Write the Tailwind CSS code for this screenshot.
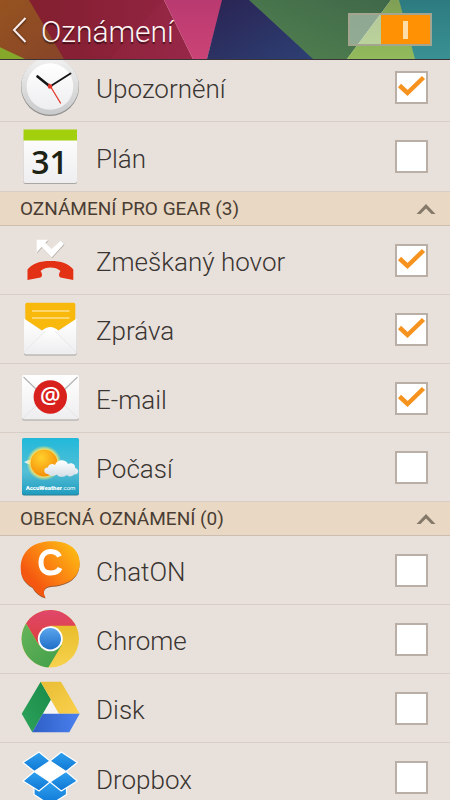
<!DOCTYPE html>
<html lang="cs">
<head>
    <meta charset="UTF-8">
    <meta name="viewport" content="width=device-width, initial-scale=1.0">
    <title>Oznámení</title>
    <script src="https://cdn.jsdelivr.net/npm/@tailwindcss/browser@4"></script>
</head>
<body class="bg-[#e8e1db] font-['Roboto',sans-serif] text-[#3a3532]">
<div class="h-screen flex flex-col overflow-hidden">
    <header class="relative z-10 h-15 shrink-0 flex items-center pl-2 pr-[18px] border-b border-[#3a3438]">
        <svg class="absolute inset-0 -z-10 w-full h-full" viewBox="0 0 450 60" preserveAspectRatio="none" aria-hidden="true">
            <defs>
                <linearGradient id="brown" x1="0" y1="0" x2="1" y2="1"><stop offset="0" stop-color="#96531f"/><stop offset="1" stop-color="#87442a"/></linearGradient>
                <linearGradient id="wine" x1="0" y1="0" x2="1" y2="0"><stop offset="0" stop-color="#85202f"/><stop offset="1" stop-color="#982748"/></linearGradient>
                <linearGradient id="pink" x1="0" y1="0" x2="0" y2="1"><stop offset="0" stop-color="#b93a70"/><stop offset="1" stop-color="#cb4376"/></linearGradient>
                <linearGradient id="navy" x1="0" y1="0" x2="1" y2="1"><stop offset="0" stop-color="#2a2352"/><stop offset="1" stop-color="#2d4074"/></linearGradient>
                <linearGradient id="green" x1="1" y1="0" x2="0" y2="1"><stop offset="0" stop-color="#3f6849"/><stop offset="1" stop-color="#52824f"/></linearGradient>
                <linearGradient id="lime" x1="0" y1="0" x2="0" y2="1"><stop offset="0" stop-color="#7f9f54"/><stop offset="1" stop-color="#92bb5c"/></linearGradient>
                <linearGradient id="teal" x1="0" y1="0" x2="0" y2="1"><stop offset="0" stop-color="#2d7b80"/><stop offset="1" stop-color="#399193"/></linearGradient>
            </defs>
            <path d="M0 0H40L70 60H0z" fill="url(#brown)"/>
            <path d="M0 48L25 60H0z" fill="#86a82a"/>
            <path d="M29 0H164L193 60H64z" fill="url(#wine)"/>
            <path d="M29 0L64 60H110L164 0z" fill="#7b1a2c" fill-opacity=".15"/>
            <path d="M164 0H223L207 60H193z" fill="url(#pink)"/>
            <path d="M222 0H250L314 60H207z" fill="url(#navy)"/>
            <path d="M249 0H391L347 60H313z" fill="url(#green)"/>
            <path d="M391 0H400L416 60H347z" fill="url(#lime)"/>
            <path d="M399 0H450V60H415z" fill="url(#teal)"/>
        </svg>
        <a href="#" aria-label="Zpět" class="w-[33px] shrink-0 pl-1">
            <svg class="w-4 h-7 drop-shadow-[0_1px_1px_rgba(0,0,0,0.6)]" viewBox="0 0 16 28" fill="none" stroke="#fbeef0" stroke-width="2"><path d="M13.5 2L2 14L13.5 26"/></svg>
        </a>
        <h1 class="flex-1 pt-1 text-[30px] leading-9 font-light text-[#fff5f5] text-shadow-[0_2px_1px_rgba(0,0,0,0.5)]">Oznámení</h1>
        <button type="button" role="switch" aria-checked="true" aria-label="Oznámení" class="w-21 h-[33px] flex justify-end border-2 border-[#a3a58f] bg-white/40">
            <span class="w-[49px] h-full flex items-center justify-center bg-[#ff9204]">
                <span class="w-[5px] h-[18px] bg-[#ffdda6]"></span>
            </span>
        </button>
    </header>

    <main class="flex-1 overflow-hidden">
        <ul class="-mt-[7px]">
            <li>
                <label class="h-[69px] flex items-center pl-5 pr-[22px] border-b border-[#d8cec6]">
                    <svg class="size-15 shrink-0" viewBox="0 0 60 60" aria-hidden="true">
                        <defs>
                            <linearGradient id="rim" x1="0" y1="0" x2="0" y2="1"><stop offset="0" stop-color="#f1f1f1"/><stop offset="1" stop-color="#c9cacb"/></linearGradient>
                            <linearGradient id="paper" x1="0" y1="0" x2="0" y2="1"><stop offset="0" stop-color="#ffffff"/><stop offset="1" stop-color="#eeeef0"/></linearGradient>
                        </defs>
                        <circle cx="30" cy="30" r="29" fill="#8f8d8b"/>
                        <circle cx="30" cy="29" r="28.7" fill="url(#rim)"/>
                        <circle cx="30" cy="29.5" r="23.3" fill="url(#paper)"/>
                        <g stroke-linecap="round">
                            <path d="M30 29.5L17.5 19.5" stroke="#151515" stroke-width="2.6"/>
                            <path d="M30 29.5L50.5 16.5" stroke="#151515" stroke-width="1.9"/>
                            <path d="M29 27L40.5 46" stroke="#e2382a" stroke-width="1.3"/>
                        </g>
                        <circle cx="30" cy="29.5" r="2.3" fill="#e2382a"/>
                    </svg>
                    <span class="flex-1 pl-4 pt-1 text-[26px] leading-8 font-light">Upozornění</span>
                    <span class="grid">
                        <input type="checkbox" checked class="peer col-start-1 row-start-1 appearance-none size-[33px] bg-white border-2 border-[#b9afa7]">
                        <svg class="hidden peer-checked:block pointer-events-none col-start-1 row-start-1 size-[33px]" viewBox="0 0 33 33" fill="none" stroke="#f6921e" stroke-width="4.5"><path d="M4.5 14.5L12.5 22L28.5 6.5"/></svg>
                    </span>
                </label>
            </li>
            <li>
                <label class="h-[69px] flex items-center pl-5 pr-[22px]">
                    <svg class="size-15 shrink-0" viewBox="0 0 60 60" aria-hidden="true">
                        <rect x="3.5" y="4" width="53.5" height="53" rx="2" fill="#a9a5a1"/>
                        <rect x="3.5" y="3" width="53.5" height="53" rx="2" fill="url(#paper)"/>
                        <path d="M3.5 2.5H57V13.5H3.5z" fill="#a3d00c"/>
                        <text x="29.5" y="46.5" text-anchor="middle" font-family="Open Sans, sans-serif" font-weight="600" font-size="32" fill="#1d2314">31</text>
                    </svg>
                    <span class="flex-1 pl-4 pt-1 text-[26px] leading-8 font-light">Plán</span>
                    <span class="grid">
                        <input type="checkbox" class="peer col-start-1 row-start-1 appearance-none size-[33px] bg-white border-2 border-[#b9afa7]">
                        <svg class="hidden peer-checked:block pointer-events-none col-start-1 row-start-1 size-[33px]" viewBox="0 0 33 33" fill="none" stroke="#f6921e" stroke-width="4.5"><path d="M4.5 14.5L12.5 22L28.5 6.5"/></svg>
                    </span>
                </label>
            </li>
        </ul>

        <section>
            <h2>
                <button type="button" aria-expanded="true" class="w-full h-[35px] flex items-center justify-between pl-5 pr-[14px] bg-[#e9d8c3] border-y border-t-[#d8cec6] border-b-[#cdbfb0]">
                    <span class="text-[19px] leading-6 text-[#4a3d33]">OZNÁMENÍ PRO GEAR (3)</span>
                    <svg class="w-5 h-3" viewBox="0 0 20 12" fill="#85796a" aria-hidden="true"><path d="M10 1L19.500 11H15.500L10 5.500L4.500 11H.5z"/></svg>
                </button>
            </h2>
            <ul>
                <li>
                    <label class="h-[69px] flex items-center pl-5 pr-[22px] border-b border-[#d8cec6]">
                        <svg class="size-15 shrink-0" viewBox="0 0 60 60" aria-hidden="true">
                            <path d="M17.2 10.5H28.8L25.8 13.7L32.2 19.7L41.2 11.5L44.5 14.7L32.2 28.2L22.2 17.7L17.2 23.2z" fill="#b5afaa"/>
                            <path d="M16.7 9.8H28.3L25.3 13L31.7 19L40.7 10.8L44 14L31.7 27.5L21.7 17L16.7 22.5z" fill="#fff"/>
                            <path d="M7.5 50V39.5C12 33.5 20 31 30.5 31S49 33.5 53.3 39.5V50L40.5 47.5C38.5 46.5 38.5 43.5 40.5 41C38 38.5 34 37.5 30.5 37.5S23 38.5 20.5 41C22.5 43.5 22.5 46.5 20.5 47.5z" fill="#e33115"/>
                        </svg>
                        <span class="flex-1 pl-4 pt-1 text-[26px] leading-8 font-light">Zmeškaný hovor</span>
                        <span class="grid">
                            <input type="checkbox" checked class="peer col-start-1 row-start-1 appearance-none size-[33px] bg-white border-2 border-[#b9afa7]">
                            <svg class="hidden peer-checked:block pointer-events-none col-start-1 row-start-1 size-[33px]" viewBox="0 0 33 33" fill="none" stroke="#f6921e" stroke-width="4.5"><path d="M4.5 14.5L12.5 22L28.5 6.5"/></svg>
                        </span>
                    </label>
                </li>
                <li>
                    <label class="h-[69px] flex items-center pl-5 pr-[22px] border-b border-[#d8cec6]">
                        <svg class="size-15 shrink-0" viewBox="0 0 60 60" aria-hidden="true">
                            <path d="M5.3 5.3q0-1.5 1.5-1.5h47q1.5 0 1.5 1.5V40H5.3z" fill="#f9b80c"/>
                            <path d="M12 12H49.5M12 19H49.5" stroke="#fde08a" stroke-width="1.5"/>
                            <path d="M4 20.5L22 31.5Q30.3 26 38.5 31.5L56.7 20.5V54.5q0 2-2 2H6q-2 0-2-2z" fill="#a5a19e"/>
                            <path d="M4 19.5L22 31.5C26 28 35 28 38.5 31.5L56.7 19.5V53.5q0 2-2 2H6q-2 0-2-2z" fill="url(#paper)"/>
                            <path d="M4.500 53L25 32.5C27.500 29 33 29 35.5 32.5L56 53" fill="url(#paper)" stroke="#e4e4e4" stroke-width=".8"/>
                            <path d="M22 32C27 26.5 33.500 26.500 38.500 32z" fill="#fff"/>
                        </svg>
                        <span class="flex-1 pl-4 pt-1 text-[26px] leading-8 font-light">Zpráva</span>
                        <span class="grid">
                            <input type="checkbox" checked class="peer col-start-1 row-start-1 appearance-none size-[33px] bg-white border-2 border-[#b9afa7]">
                            <svg class="hidden peer-checked:block pointer-events-none col-start-1 row-start-1 size-[33px]" viewBox="0 0 33 33" fill="none" stroke="#f6921e" stroke-width="4.5"><path d="M4.5 14.5L12.5 22L28.5 6.5"/></svg>
                        </span>
                    </label>
                </li>
                <li>
                    <label class="h-[69px] flex items-center pl-5 pr-[22px] border-b border-[#d8cec6]">
                        <svg class="size-15 shrink-0" viewBox="0 0 60 60" aria-hidden="true">
                            <rect x="2" y="8" width="57" height="44.5" rx="2" fill="#a5a19e"/>
                            <rect x="2" y="7" width="57" height="44.5" rx="2" fill="url(#paper)"/>
                            <path d="M3 50L17 37M58 50L44 37" stroke="#e4e4e4"/>
                            <path d="M3.5 9L17 22M57.5 9L44 22" stroke="#b4b4b4" stroke-width="1.2"/>
                            <circle cx="30.3" cy="29" r="16.7" fill="#d8201c"/>
                            <text x="30.3" y="35.5" text-anchor="middle" font-family="Open Sans, sans-serif" font-weight="600" font-size="23" fill="#fff">@</text>
                        </svg>
                        <span class="flex-1 pl-4 pt-1 text-[26px] leading-8 font-light">E-mail</span>
                        <span class="grid">
                            <input type="checkbox" checked class="peer col-start-1 row-start-1 appearance-none size-[33px] bg-white border-2 border-[#b9afa7]">
                            <svg class="hidden peer-checked:block pointer-events-none col-start-1 row-start-1 size-[33px]" viewBox="0 0 33 33" fill="none" stroke="#f6921e" stroke-width="4.5"><path d="M4.5 14.5L12.5 22L28.5 6.5"/></svg>
                        </span>
                    </label>
                </li>
                <li>
                    <label class="h-[68px] flex items-center pl-5 pr-[22px]">
                        <svg class="size-15 shrink-0" viewBox="0 0 60 60" aria-hidden="true">
                            <defs>
                                <linearGradient id="sky" x1="0" y1="0" x2="0" y2="1"><stop offset="0" stop-color="#22b9da"/><stop offset=".6" stop-color="#55bfd6"/><stop offset="1" stop-color="#1f9cc0"/></linearGradient>
                                <radialGradient id="sun" cx=".4" cy=".3" r=".75"><stop offset="0" stop-color="#ffd02c"/><stop offset="1" stop-color="#f58a07"/></radialGradient>
                                <radialGradient id="glow"><stop offset=".75" stop-color="#ffe96a"/><stop offset="1" stop-color="#ffe96a" stop-opacity="0"/></radialGradient>
                                <linearGradient id="cloud" x1="0" y1="0" x2="0" y2="1"><stop offset="0" stop-color="#ffffff"/><stop offset="1" stop-color="#d5dee6"/></linearGradient>
                            </defs>
                            <rect x="2" y="1.5" width="57" height="57" rx="2" fill="#2a7f94"/>
                            <rect x="2" y="1" width="57" height="56.5" rx="2" fill="url(#sky)"/>
                            <path d="M4 25Q9 22 14 23L13 28Q8 28 4 25z" fill="#d8eef2"/>
                            <circle cx="24" cy="26" r="17.5" fill="url(#glow)"/>
                            <circle cx="24" cy="26" r="13.5" fill="url(#sun)"/>
                            <path d="M28 37C23 37 23 30 28 30.5C28 27 33 26 35 28C37 22 46 22 48 27C52 25 56 28 55 31C60 32 59 38 54 37.5C52 40 48 40 47 38C43 41 38 40 37 37.5C34 39.5 30 39.5 28 37z" fill="url(#cloud)"/>
                            <text x="30.5" y="52.5" text-anchor="middle" font-family="Roboto, sans-serif" font-size="6" fill="#fff"><tspan font-weight="900">AccuWeather</tspan>.com</text>
                        </svg>
                        <span class="flex-1 pl-4 pt-1 text-[26px] leading-8 font-light">Počasí</span>
                        <span class="grid">
                            <input type="checkbox" class="peer col-start-1 row-start-1 appearance-none size-[33px] bg-white border-2 border-[#b9afa7]">
                            <svg class="hidden peer-checked:block pointer-events-none col-start-1 row-start-1 size-[33px]" viewBox="0 0 33 33" fill="none" stroke="#f6921e" stroke-width="4.5"><path d="M4.5 14.5L12.5 22L28.5 6.5"/></svg>
                        </span>
                    </label>
                </li>
            </ul>
        </section>

        <section>
            <h2>
                <button type="button" aria-expanded="true" class="w-full h-[35px] flex items-center justify-between pl-5 pr-[14px] bg-[#e9d8c3] border-y border-t-[#d8cec6] border-b-[#cdbfb0]">
                    <span class="text-[19px] leading-6 text-[#4a3d33]">OBECNÁ OZNÁMENÍ (0)</span>
                    <svg class="w-5 h-3" viewBox="0 0 20 12" fill="#85796a" aria-hidden="true"><path d="M10 1L19.5 11H15.5L10 5.5L4.5 11H.5z"/></svg>
                </button>
            </h2>
            <ul>
                <li>
                    <label class="h-[69px] flex items-center pl-5 pr-[22px] border-b border-[#d8cec6]">
                        <svg class="size-15 shrink-0" viewBox="0 0 60 60" aria-hidden="true">
                            <defs>
                                <linearGradient id="chat" x1=".9" y1=".1" x2=".2" y2=".7"><stop offset="0" stop-color="#fdb813"/><stop offset=".6" stop-color="#fb8012"/><stop offset="1" stop-color="#f4570f"/></linearGradient>
                            </defs>
                            <path d="M30 2C48 1 59.5 10 59.5 24C59.5 40 46 46 31 47C24 48 22 52 25.5 58.5C20 57 15 53 12.5 48C5 44 1 38 1 29C1 13 12 3 30 2z" fill="#9b5a35"/>
                            <path d="M30 1.2C48 .5 59.7 9 59.7 23C59.7 39 46 45 31 46C24 47 22 51 25.500 57.500C20 56 15 52 12.500 47C5 43 .7 37 .7 28C.7 12 12 2 30 1.200z" fill="url(#chat)"/>
                            <path d="M39.500 16.500C37.500 12.500 34.500 11.500 30.800 11.500C24.500 11.500 21 16 21 22.500S24.500 33 30.800 33C35 33 38.500 31.500 40 28" fill="none" stroke="#fff" stroke-width="5"/>
                        </svg>
                        <span class="flex-1 pl-4 pt-1 text-[26px] leading-8 font-light">ChatON</span>
                        <span class="grid">
                            <input type="checkbox" class="peer col-start-1 row-start-1 appearance-none size-[33px] bg-white border-2 border-[#b9afa7]">
                            <svg class="hidden peer-checked:block pointer-events-none col-start-1 row-start-1 size-[33px]" viewBox="0 0 33 33" fill="none" stroke="#f6921e" stroke-width="4.5"><path d="M4.5 14.5L12.5 22L28.5 6.5"/></svg>
                        </span>
                    </label>
                </li>
                <li>
                    <label class="h-[69px] flex items-center pl-5 pr-[22px] border-b border-[#d8cec6]">
                        <svg class="size-15 shrink-0" viewBox="0 0 60 60" aria-hidden="true">
                            <defs>
                                <linearGradient id="cred" x1="0" y1="0" x2="0" y2="1"><stop offset="0" stop-color="#e0476b"/><stop offset="1" stop-color="#dc3f3c"/></linearGradient>
                                <linearGradient id="cyellow" x1="0" y1="0" x2="0" y2="1"><stop offset="0" stop-color="#e3b620"/><stop offset="1" stop-color="#f7d24d"/></linearGradient>
                                <linearGradient id="cgreen" x1="0" y1="0" x2="1" y2="1"><stop offset="0" stop-color="#68b45a"/><stop offset="1" stop-color="#3f9e49"/></linearGradient>
                                <linearGradient id="cblue" x1="0" y1="0" x2="0" y2="1"><stop offset="0" stop-color="#5ba5ec"/><stop offset="1" stop-color="#1f6fc9"/></linearGradient>
                            </defs>
                            <circle cx="30.3" cy="29.8" r="28.7" fill="url(#cyellow)"/>
                            <path d="M30.3 16.8H55.9A28.7 28.7 0 0 0 6 14.5L19 36.3z" fill="url(#cred)"/>
                            <path d="M6 14.5A28.7 28.7 0 0 0 28.3 58.4L41.6 36.3L30.3 30L19 36.3z" fill="url(#cgreen)"/>
                            <circle cx="30.3" cy="29.8" r="12.5" fill="#fff"/>
                            <circle cx="30.3" cy="29.8" r="10.7" fill="url(#cblue)"/>
                        </svg>
                        <span class="flex-1 pl-4 pt-1 text-[26px] leading-8 font-light">Chrome</span>
                        <span class="grid">
                            <input type="checkbox" class="peer col-start-1 row-start-1 appearance-none size-[33px] bg-white border-2 border-[#b9afa7]">
                            <svg class="hidden peer-checked:block pointer-events-none col-start-1 row-start-1 size-[33px]" viewBox="0 0 33 33" fill="none" stroke="#f6921e" stroke-width="4.5"><path d="M4.5 14.5L12.5 22L28.5 6.5"/></svg>
                        </span>
                    </label>
                </li>
                <li>
                    <label class="h-[69px] flex items-center pl-5 pr-[22px] border-b border-[#d8cec6]">
                        <svg class="size-15 shrink-0" viewBox="0 0 60 60" aria-hidden="true">
                            <defs>
                                <linearGradient id="dgreen" x1="0" y1="1" x2="1" y2="0"><stop offset="0" stop-color="#2fa45c"/><stop offset="1" stop-color="#178a48"/></linearGradient>
                                <linearGradient id="dyellow" x1="0" y1="0" x2="1" y2="1"><stop offset="0" stop-color="#e9bd34"/><stop offset="1" stop-color="#fad04d"/></linearGradient>
                                <linearGradient id="dblue" x1="0" y1="0" x2="1" y2="0"><stop offset="0" stop-color="#2f5fc6"/><stop offset="1" stop-color="#4a80ee"/></linearGradient>
                            </defs>
                            <path d="M30.3 21L39.5 36.5H22z" fill="#f7f5f3"/>
                            <path d="M20.7 3.8L1.7 35.8L12.3 54.2L31 21.5z" fill="url(#dgreen)"/>
                            <path d="M20.7 3.8H41L59.7 35.8H39z" fill="url(#dyellow)"/>
                            <path d="M12.3 54.2H49.3L59.7 35.8H22.8z" fill="url(#dblue)"/>
                        </svg>
                        <span class="flex-1 pl-4 pt-1 text-[26px] leading-8 font-light">Disk</span>
                        <span class="grid">
                            <input type="checkbox" class="peer col-start-1 row-start-1 appearance-none size-[33px] bg-white border-2 border-[#b9afa7]">
                            <svg class="hidden peer-checked:block pointer-events-none col-start-1 row-start-1 size-[33px]" viewBox="0 0 33 33" fill="none" stroke="#f6921e" stroke-width="4.5"><path d="M4.5 14.5L12.5 22L28.5 6.5"/></svg>
                        </span>
                    </label>
                </li>
                <li>
                    <label class="h-[69px] flex items-center pl-5 pr-[22px]">
                        <svg class="size-15 shrink-0" viewBox="0 0 60 60" aria-hidden="true">
                            <defs>
                                <linearGradient id="box" x1="0" y1="0" x2="0" y2="1"><stop offset="0" stop-color="#2ea0ee"/><stop offset="1" stop-color="#0f76d4"/></linearGradient>
                            </defs>
                            <path d="M14.3 23.5L30 13L46 23.5L30 34.5z" fill="#fff"/>
                            <g fill="url(#box)" stroke="#fff" stroke-width="1.2" stroke-linejoin="round">
                                <path d="M14 38L30 34L46.5 38V46.5L30 57L14 46.5z"/>
                                <path d="M3 33L14.3 23.5L30 34L19 43z"/>
                                <path d="M57.3 33L46 23.5L30 34L41.3 43z"/>
                                <path d="M3 14.5L19 4L30 13L14.3 23.5z"/>
                                <path d="M57.3 14.5L41.3 4L30 13L46 23.5z"/>
                            </g>
                        </svg>
                        <span class="flex-1 pl-4 pt-1 text-[26px] leading-8 font-light">Dropbox</span>
                        <span class="grid">
                            <input type="checkbox" class="peer col-start-1 row-start-1 appearance-none size-[33px] bg-white border-2 border-[#b9afa7]">
                            <svg class="hidden peer-checked:block pointer-events-none col-start-1 row-start-1 size-[33px]" viewBox="0 0 33 33" fill="none" stroke="#f6921e" stroke-width="4.5"><path d="M4.5 14.5L12.5 22L28.5 6.5"/></svg>
                        </span>
                    </label>
                </li>
            </ul>
        </section>
    </main>
</div>
</body>
</html>
